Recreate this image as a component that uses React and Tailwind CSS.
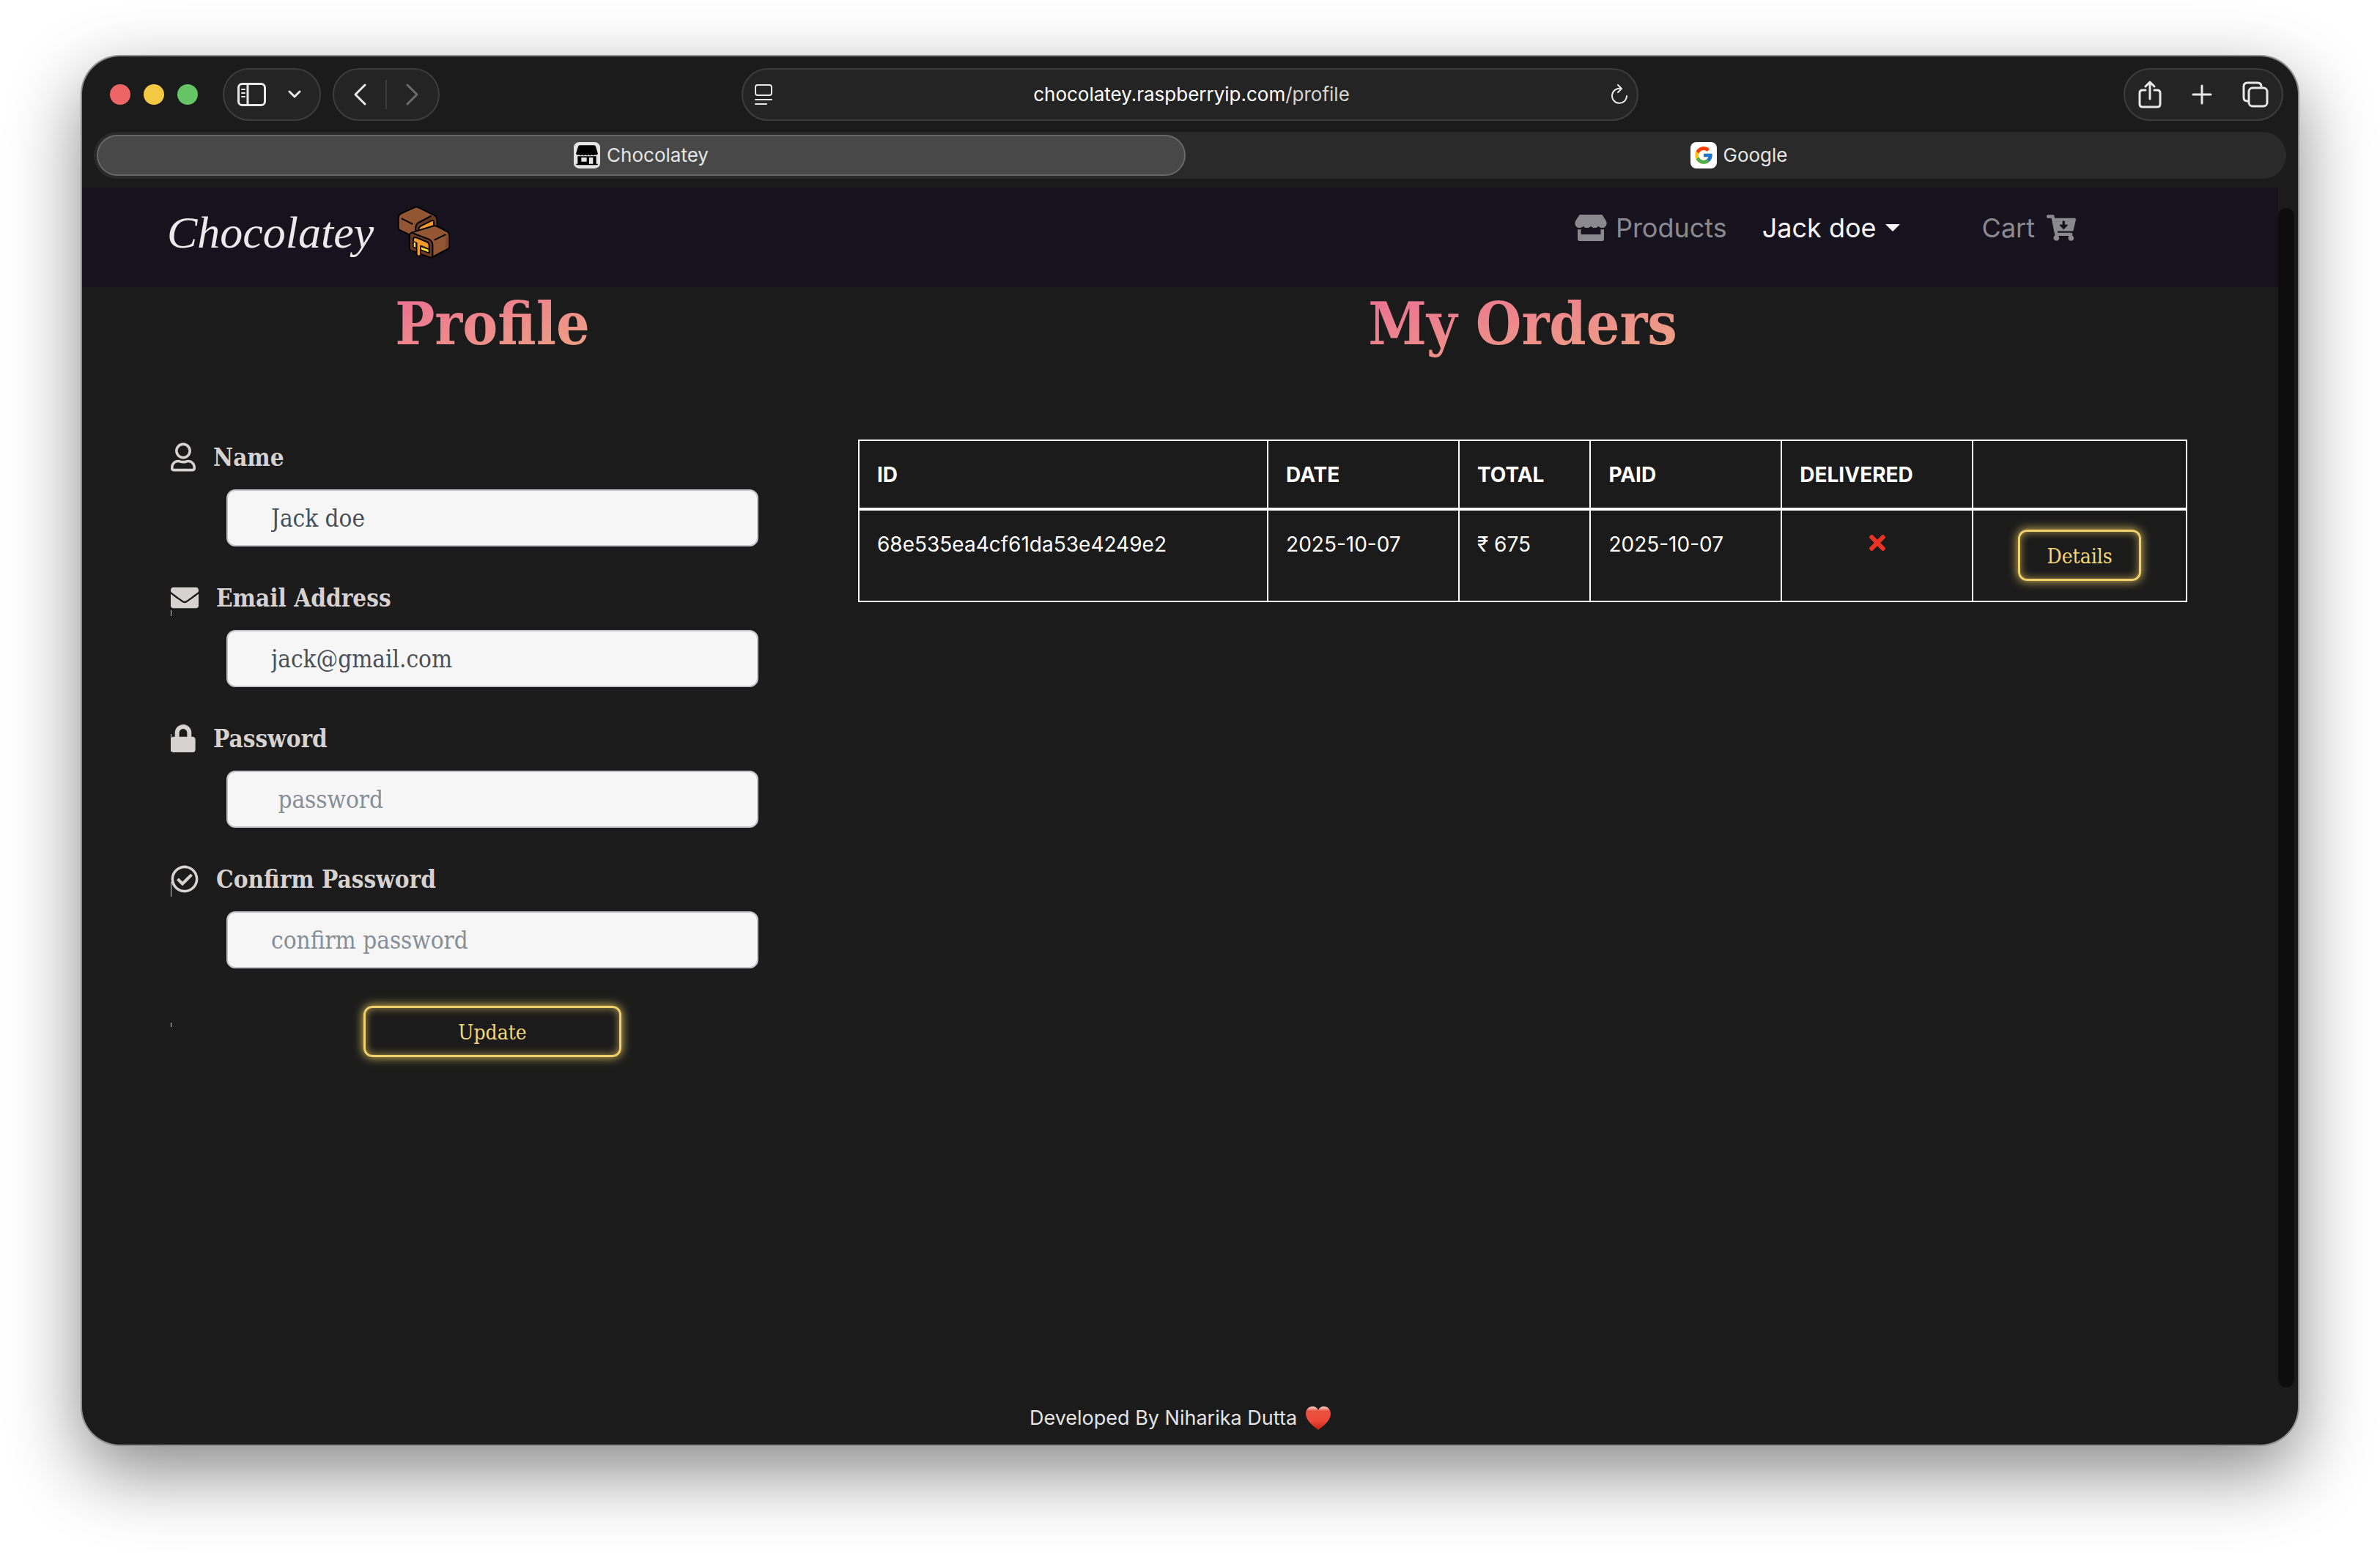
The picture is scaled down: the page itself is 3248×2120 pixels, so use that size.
import React from "react";
import { FaStore, FaCartArrowDown, FaRegUser, FaEnvelope, FaLock, FaRegCheckCircle, FaTimes } from "react-icons/fa";
import { FcGoogle } from "react-icons/fc";

function Lines({ className, box, width = 3, children }) {
  return (
    <svg className={className} viewBox={box} fill="none" stroke="currentColor" strokeWidth={width} strokeLinecap="round" strokeLinejoin="round" aria-hidden="true">
      {children}
    </svg>
  );
}

function ChocolateLogo() {
  return (
    <svg className="h-[72px] w-[72px]" viewBox="0 0 216 216" stroke="#000" strokeWidth="6" strokeLinejoin="round" strokeLinecap="round" aria-hidden="true">
      <path fill="#935635" d="M5 50Q5 38 15 32L70 7Q79 2 88 7L150 38Q163 45 163 58V94L92 122L58 122L10 99Q5 96 5 89Z" />
      <path fill="#6b3a24" d="M72 116V86Q74 70 88 63L140 40Q160 44 160 60V94L90 124Z" stroke="none" />
      <path fill="none" d="M20 53L62 74M76 106V88Q78 74 90 68L138 42" />
      <path fill="#f39a2d" d="M88 102V94Q90 86 98 82L140 61Q150 57 150 66V88Z" />
      <path fill="#935635" d="M51 122Q51 113 60 109L142 84Q153 79 164 84L202 104Q214 110 214 124V166Q214 173 207 177L144 210Q138 213 131 210L57 182Q51 179 51 172Z" />
      <path fill="#6b3a24" stroke="none" d="M54 124Q58 112 68 114L128 138Q143 146 143 160V208L134 207L60 180Q54 178 54 172Z" />
      <path fill="none" d="M62 111L130 137Q145 145 145 160V208M154 139L197 118" />
      <path fill="#6b3a24" stroke="none" d="M198 118L211 114V168L198 176Z" opacity=".45" />
      <path fill="#6b3a24" d="M66 138Q66 126 78 130L120 147Q131 152 131 163V192L66 168Z" />
      <path fill="#f5d93c" stroke="none" d="M68 146H78V172L68 167ZM96 163L128 175V190L96 178Z" />
      <path fill="none" strokeWidth="5" d="M68 146L78 150V170M96 165L128 177" />
      <path fill="#f39a2d" stroke="none" d="M69 139Q69 130 77 133L119 150Q128 154 128 164V173L98 160V200Q97 206 89 206Q81 205 81 198V150L69 145Z" />
      <path fill="none" strokeWidth="5" d="M80 152V196Q80 206 88 206Q96 206 96 198V164" />
    </svg>
  );
}

function ShopFavicon() {
  return (
    <svg className="h-9 w-9" viewBox="0 0 108 108" aria-hidden="true">
      <rect width="108" height="108" rx="22" fill="#e4e4e4" />
      <path d="M24 13H84Q88 13 90 18L99 48Q93 56 87 52Q80 58 74 52Q67 58 61 52Q54 58 48 52Q41 58 35 52Q28 58 22 52Q15 56 9 48L18 18Q20 13 24 13Z" />
      <path d="M16 58H92V89H98V94H10V89H16ZM31 63V80H53V63ZM63 63V89H79V63Z" fillRule="evenodd" />
    </svg>
  );
}

function Heart() {
  return (
    <svg className="h-8 w-[34px]" viewBox="0 0 34 32" role="img" aria-label="love">
      <defs>
        <linearGradient id="heartFill" x1="0" y1="0" x2="0" y2="1">
          <stop offset="0" stopColor="#ffd9d0" />
          <stop offset=".2" stopColor="#e8503f" />
          <stop offset=".6" stopColor="#ee4a38" />
          <stop offset="1" stopColor="#c22318" />
        </linearGradient>
      </defs>
      <path d="M17 32C12 28 0 20 0 10C0 4 4 0 9 0C13 0 16 2 17 5C18 2 21 0 25 0C30 0 34 4 34 10C34 20 22 28 17 32Z" fill="url(#heartFill)" />
    </svg>
  );
}

const pill = "flex h-[72px] items-center rounded-full border-2 border-[#3d3d3d] bg-[#242424]";

function Toolbar() {
  return (
    <div className="grid h-[103px] grid-cols-[1fr_41%_1fr] items-center px-5 text-[#e8e8e8]">
      <div className="flex items-center pl-[18px]">
        <div className="flex gap-[18px]">
          <button aria-label="Close" className="h-7 w-7 rounded-full bg-[#ed6565]" />
          <button aria-label="Minimise" className="h-7 w-7 rounded-full bg-[#f3c944]" />
          <button aria-label="Zoom" className="h-7 w-7 rounded-full bg-[#65c466]" />
        </div>
        <div className={pill + " ml-[34px] w-[134px] justify-between pl-[18px] pr-[25px]"}>
          <button aria-label="Sidebar">
            <Lines className="h-8 w-10" box="0 0 40 32">
              <rect x="1.5" y="1.5" width="36" height="29" rx="5" />
              <path d="M14 2V30" />
              <path d="M6 9H10M6 14H10M6 19H10" strokeWidth="2" />
            </Lines>
          </button>
          <button aria-label="Tab groups">
            <Lines className="h-3 w-[18px]" box="0 0 18 12"><path d="M2 2L9 9L16 2" /></Lines>
          </button>
        </div>
        <div className={pill + " ml-4 w-[146px] justify-between px-[26px]"}>
          <button aria-label="Back">
            <Lines className="h-[30px] w-[18px]" box="0 0 18 30"><path d="M16 2L3 15L16 28" /></Lines>
          </button>
          <span className="h-10 w-[2px] bg-[#3b3b3b]" />
          <button aria-label="Forward" className="text-[#6a6a6a]">
            <Lines className="h-[30px] w-[18px]" box="0 0 18 30"><path d="M2 2L15 15L2 28" /></Lines>
          </button>
        </div>
      </div>
      <div className={pill + " justify-between pl-4 pr-3"}>
        <button aria-label="Reader">
          <Lines className="h-7 w-6" box="0 0 24 28" width="2">
            <rect x="1" y="1" width="22" height="14" rx="3" />
            <path d="M1 21H23M1 27H16" />
          </Lines>
        </button>
        <a href="#profile" className="text-[26px] leading-9 text-white">chocolatey.raspberryip.com<span className="text-[#d6d6d6]">/profile</span></a>
        <button aria-label="Reload">
          <Lines className="h-7 w-6" box="0 0 24 28" width="2">
            <path d="M14 6A10 10 0 1 0 22 16M10 1L15 6L10 11" />
          </Lines>
        </button>
      </div>
      <div className={pill + " w-[218px] justify-between justify-self-end px-[18px]"}>
        <button aria-label="Share">
          <Lines className="h-[38px] w-8" box="0 0 32 38">
            <path d="M10 13H6Q2 13 2 17V32Q2 36 6 36H26Q30 36 30 32V17Q30 13 26 13H22M16 25V2M10 8L16 2L22 8" />
          </Lines>
        </button>
        <button aria-label="New tab">
          <Lines className="h-7 w-7" box="0 0 28 28"><path d="M14 2V26M2 14H26" /></Lines>
        </button>
        <button aria-label="Tab overview">
          <Lines className="h-9 w-9" box="0 0 36 36">
            <rect x="9" y="9" width="25" height="25" rx="5" />
            <path d="M7 27Q2 27 2 22V7Q2 2 7 2H21Q26 2 26 7" />
          </Lines>
        </button>
      </div>
    </div>
  );
}

function TabBar() {
  const tab = "flex items-center justify-center gap-[9px] rounded-full text-[26px] leading-8 text-[#e6e6e6]";
  return (
    <div className="mx-4 mb-3 grid h-16 grid-cols-2 gap-3 rounded-full bg-[#2a2a2a] p-1">
      <button className={tab + " border-2 border-[#686868] bg-[#484848]"}><ShopFavicon />Chocolatey</button>
      <button className={tab}>
        <span className="flex h-9 w-9 items-center justify-center rounded-lg bg-white"><FcGoogle className="h-7 w-7" /></span>
        Google
      </button>
    </div>
  );
}

function Navbar() {
  return (
    <header className="flex h-[136px] justify-between bg-[#16131e] pb-[26px] pl-[116px] pr-[276px]">
      <a href="#home" className="flex items-center gap-8 pt-3">
        <span className="font-['Liberation_Serif',serif] text-[62px] italic leading-none text-[#ebe9ec]">Chocolatey</span>
        <ChocolateLogo />
      </a>
      <nav className="flex items-center text-[36px] leading-10 text-[#8a898f]">
        <a href="#products" className="flex items-center gap-3"><FaStore className="h-9 w-11" />Products</a>
        <button className="ml-12 flex items-center gap-3 text-[#f7f5fa]">
          Jack doe
          <svg className="h-[10px] w-5" viewBox="0 0 20 10" fill="currentColor" aria-hidden="true"><path d="M0 0H20L10 10Z" /></svg>
        </button>
        <a href="#cart" className="ml-28 flex items-center gap-4">Cart<FaCartArrowDown className="h-9 w-10" /></a>
      </nav>
    </header>
  );
}

function Title({ children }) {
  return (
    <h1 className="mx-auto w-fit bg-gradient-to-br from-[#eb6c92] to-[#eda582] bg-clip-text font-['DejaVu_Serif_Condensed','DejaVu_Serif',serif] text-[80px] font-bold leading-[92px] text-transparent">
      {children}
    </h1>
  );
}

function Sliver({ className }) {
  return <span className={"absolute left-0 w-px bg-[#d5d1d0] " + className} />;
}

function Field({ id, label, icon, sliver, ...input }) {
  return (
    <div className="relative mb-[46px]">
      <label htmlFor={id} className="flex h-12 items-center gap-6 text-[33px] font-bold leading-none text-[#d6d2d1]">
        {icon}
        {label}
      </label>
      {sliver && <Sliver className={sliver} />}
      <input
        id={id}
        className="mx-auto mt-5 block h-[78px] w-[726px] max-w-full rounded-xl border-2 border-[#c4c5c9] bg-[#f6f6f6] pl-[59px] pr-6 text-[33px] text-[#495057] placeholder:text-[#868e96]"
        {...input}
      />
    </div>
  );
}

const glow = "h-[70px] rounded-xl border-[3px] border-[#efd06c] pt-1 text-[28px] leading-none text-[#f5d876] font-['DejaVu_Serif_Condensed','DejaVu_Serif',serif] shadow-[0_0_14px_#e8c860,inset_0_0_12px_#a8904a]";

function Profile() {
  return (
    <section>
      <Title>Profile</Title>
      <form className="relative mt-28 font-['DejaVu_Serif_Condensed','DejaVu_Serif',serif]">
        <Field id="name" label="Name" icon={<FaRegUser className="h-10 w-[34px]" />} defaultValue="Jack doe" />
        <Field id="email" type="email" label="Email Address" icon={<FaEnvelope className="h-[38px] w-[38px]" />} defaultValue="jack@gmail.com" sliver="top-[41px] h-2" />
        <Field id="password" type="password" label="Password" icon={<FaLock className="h-[38px] w-[34px]" />} placeholder=" password" sliver="top-[18px] h-6" />
        <Field id="confirm" type="password" label="Confirm Password" icon={<FaRegCheckCircle className="h-[38px] w-[38px]" />} placeholder="confirm password" sliver="top-7 h-5" />
        <div className="relative flex justify-center pt-[5px]">
          <Sliver className="top-7 h-[6px]" />
          <button type="button" className={glow + " w-[352px]"}>Update</button>
        </div>
      </form>
    </section>
  );
}

function Orders() {
  const cell = "border-x-2 border-t-2 border-white px-6 text-left";
  return (
    <section>
      <Title>My Orders</Title>
      <table className="mt-28 w-full table-fixed border-collapse border-2 border-white text-[28px] leading-9 text-white">
        <colgroup>
          <col className="w-[30.8%]" />
          <col className="w-[14.4%]" />
          <col className="w-[9.9%]" />
          <col className="w-[14.4%]" />
          <col className="w-[14.4%]" />
          <col />
        </colgroup>
        <thead>
          <tr className="h-[94px] border-b-4 border-white">
            {["ID", "DATE", "TOTAL", "PAID", "DELIVERED", ""].map((h, i) => (
              <th key={i} className={cell + " font-bold"}>{h}</th>
            ))}
          </tr>
        </thead>
        <tbody>
          <tr className="h-[126px] align-top">
            <td className={cell + " pt-7"}>68e535ea4cf61da53e4249e2</td>
            <td className={cell + " pt-7"}>2025-10-07</td>
            <td className={cell + " pt-7"}>₹ 675</td>
            <td className={cell + " pt-7"}>2025-10-07</td>
            <td className={cell + " pt-7"}><FaTimes className="mx-auto h-8 w-8 text-[#ea3323]" aria-label="Not delivered" /></td>
            <td className={cell + " pt-[26px] pb-6"}><button className={glow + " mx-auto block w-[168px]"}>Details</button></td>
          </tr>
        </tbody>
      </table>
    </section>
  );
}

export default function App() {
  return (
    <div className="flex min-h-screen bg-white px-28 pb-[148px] pt-[77px] font-['Inter','Noto_Sans',sans-serif]">
      <div className="flex flex-1 flex-col overflow-hidden rounded-[52px] bg-[#1b1b1b] shadow-[0_0_0_2px_#8f8f8f,0_36px_100px_rgba(0,0,0,0.48)]">
        <Toolbar />
        <TabBar />
        <div className="flex flex-1">
          <div className="flex flex-1 flex-col">
            <Navbar />
            <main className="grid grid-cols-[878fr_1814fr] gap-[60px] pl-[121px] pr-[124px] pt-1">
              <Profile />
              <Orders />
            </main>
            <footer className="mt-auto flex items-center justify-center gap-3 pb-[18px] text-[27px] leading-9 text-[#e4e4e4]">
              Developed By Niharika Dutta
              <Heart />
            </footer>
          </div>
          <div className="flex w-[27px] pb-[78px] pt-7">
            <div className="w-[22px] rounded-full bg-[#0d0d0d]" />
          </div>
        </div>
      </div>
    </div>
  );
}
